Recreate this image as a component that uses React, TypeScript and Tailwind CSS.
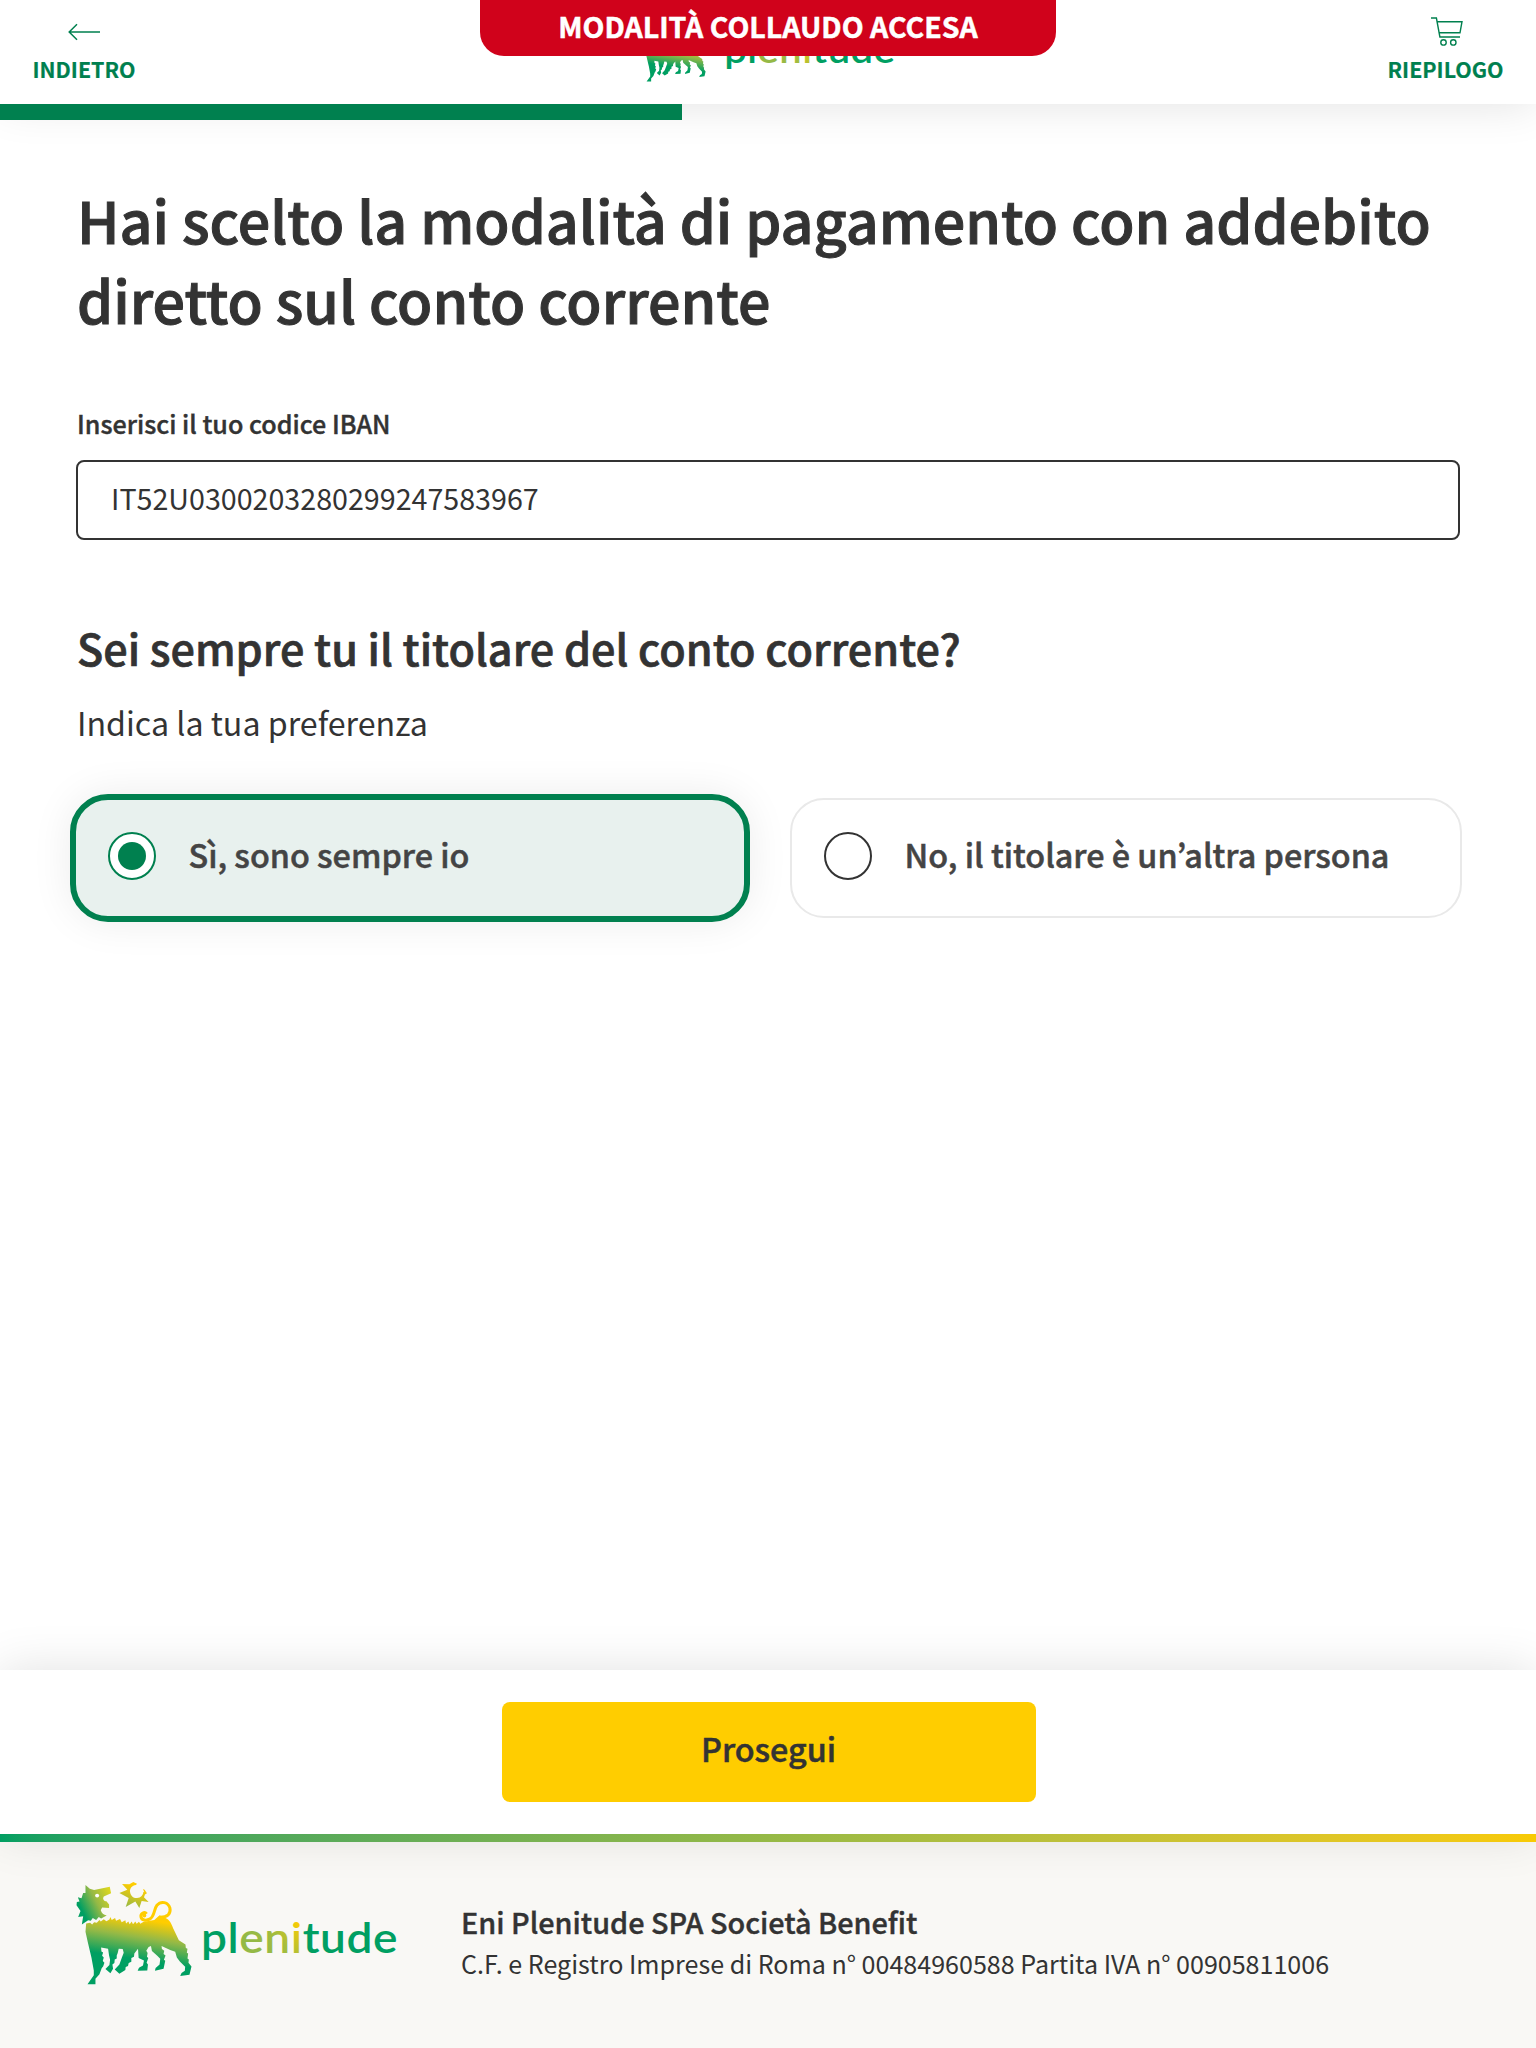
import React, { useState } from "react";

function ArrowLeftIcon() {
  return (
    <svg width="32" height="18" viewBox="0 0 32 18" fill="none" stroke="#00804f" strokeWidth="1.5">
      <path d="M32 9H1.5M9 1.2L1.2 9L9 16.8" />
    </svg>
  );
}

function CartIcon() {
  return (
    <svg width="32" height="29" viewBox="0 0 32 29" fill="none" stroke="#00804f" strokeWidth="1.4">
      <path d="M0 1H5.4L8.9 20H29" />
      <path d="M6 4.7H31L29 15.8H8" />
      <circle cx="12.5" cy="25.4" r="2.7" />
      <circle cx="22.3" cy="25.4" r="2.7" />
    </svg>
  );
}

function SixLeggedDog({ id, className }: { id: string; className: string }) {
  return (
    <svg className={className} viewBox="33 34 348 313">
      <defs>
        <linearGradient id={id + "-head"} gradientUnits="userSpaceOnUse" x1="48" y1="118" x2="138" y2="72">
          <stop offset="0" stopColor="#009f62" />
          <stop offset="0.5" stopColor="#95b946" />
          <stop offset="1" stopColor="#dbd61f" />
        </linearGradient>
        <linearGradient id={id + "-body"} gradientUnits="userSpaceOnUse" x1="225" y1="148" x2="206" y2="268">
          <stop offset="0" stopColor="#ffcd00" />
          <stop offset="0.45" stopColor="#95b946" />
          <stop offset="1" stopColor="#009f62" />
        </linearGradient>
        <linearGradient id={id + "-sun"} gradientUnits="userSpaceOnUse" x1="215" y1="50" x2="190" y2="115">
          <stop offset="0" stopColor="#ffcd00" />
          <stop offset="1" stopColor="#95b946" />
        </linearGradient>
      </defs>
      <path
        fill={"url(#" + id + "-head)"}
        d="M61 46L74 57L87 61L134 51L138 71L116 81L114 86C115 93 119 96 124 95L132 105L132 115L111 114L107 122C110 131 115 135 125 138L108 147L101 142L93 151L83 145L77 154L69 152L50 165L54 140L39 142L46 124L34 107L35 97L43 96L38 83L49 86L54 70L61 70Z"
      />
      <circle cx="96" cy="78" r="6" fill="#fff" />
      <path
        fill={"url(#" + id + "-body)"}
        d="M63 162L75 160L81 165L87 158L95 160L103 151L107 156L116 149L124 155L133 150L136 142L140 151L150 145L153 154L165 148L170 158L181 152L183 162L190 156L194 164L200 156L204 164L211 156L215 163L222 157L226 163L236 157L268 151L284 137L305 147C318 155 321 168 327 181L342 212L362 225L363 236L368 238L366 250L370 252L368 267L372 270L371 280L380 291L374 316L346 320L350 311L360 304L361 292L345 276L336 264L331 247L316 242L290 230L291 239L298 244L296 254L302 258L297 271L301 274L296 298L270 304L272 296L284 285L286 268L277 259L261 245L258 230L251 233L244 244L248 251L246 262L250 266L245 280L249 285L247 303L218 304L222 295L234 288L237 273L221 266L219 238L208 252L207 262L199 266L199 277L191 281L189 290L182 293L181 302L163 313L149 300L163 285L170 266L176 250L173 239L161 238L158 251L155 258L155 267L149 270L148 281L142 285L144 298L136 312L121 299L133 287L135 271L132 258L129 238L108 234L109 246L114 249L111 259L116 264L113 275L118 280L114 291L110 296L103 315L91 328L91 345L67 345L86 318L86 303L79 265L68 218L61 187Z"
      />
      <path
        d="M245 133C239 125 226 131 228 142C230 153 244 154 254 149C269 142 267 118 276 107C289 92 310 98 315 115C319 133 307 143 286 143"
        fill="none"
        stroke="#ffcd00"
        strokeWidth="9"
      />
      <circle cx="238" cy="138" r="6" fill="#ffcd00" />
      <path
        fill={"url(#" + id + "-sun)"}
        d="M171 43L193 44L205 37L216 42L213 46C201 47 194 57 195 66C197 79 206 86 216 85C228 84 235 76 235 66L238 68L234 58L239 60L246 71L240 75L237 83L251 97L230 94L223 115L211 96L182 112L191 85L163 70L187 60Z"
      />
    </svg>
  );
}

function Wordmark({ id, className }: { id: string; className: string }) {
  return (
    <svg className={className} viewBox="0 0 194 42">
      <defs>
        <linearGradient id={id + "-en"} gradientUnits="userSpaceOnUse" x1="60" y1="30" x2="97" y2="3">
          <stop offset="0" stopColor="#95b946" />
          <stop offset="0.45" stopColor="#a5bd3c" />
          <stop offset="1" stopColor="#ffcd00" />
        </linearGradient>
      </defs>
      <text
        x="-2"
        y="32.5"
        textLength="197"
        lengthAdjust="spacingAndGlyphs"
        fontFamily="Lato, sans-serif"
        fontWeight="600"
        fontSize="41.5"
        letterSpacing="0.5"
        fill="#009f62"
      >
        pl<tspan fill={"url(#" + id + "-en)"}>eni</tspan>tude
      </text>
    </svg>
  );
}

function RadioMark({ checked }: { checked: boolean }) {
  return checked ? (
    <span className="flex size-12 shrink-0 items-center justify-center rounded-full border-2 border-[#00804f] bg-white">
      <span className="size-7 rounded-full bg-[#00804f]" />
    </span>
  ) : (
    <span className="size-12 shrink-0 rounded-full border-2 border-[#333]" />
  );
}

function Option({ label, checked, onSelect }: { label: string; checked: boolean; onSelect: () => void }) {
  return (
    <button
      onClick={onSelect}
      className={
        checked
          ? "-m-1 flex h-32 items-center rounded-[38px] border-6 border-[#00804f] bg-[#e8f1ee] pb-1 pl-8 shadow-[0_0_40px_rgba(0,0,0,0.08)]"
          : "flex h-[120px] items-center rounded-[34px] border-2 border-[#e9e9e9] bg-white pb-1 pl-8"
      }
    >
      <RadioMark checked={checked} />
      <span className="ml-[32.5px] pb-1 text-[32.35px] leading-10 font-medium whitespace-nowrap text-[#444] [-webkit-text-stroke:0.5px]">
        {label}
      </span>
    </button>
  );
}

export default function App() {
  const [owner, setOwner] = useState(0);
  const options = ["Sì, sono sempre io", "No, il titolare è un’altra persona"];
  return (
    <div className="relative flex h-[2048px] w-[1536px] flex-col overflow-hidden bg-white font-['Noto_Sans_CJK_KR',sans-serif] text-[#333]">
      <header className="relative flex h-[104px] shrink-0 justify-between bg-white px-8 shadow-[0_0_46px_rgba(0,0,0,0.12)]">
        <button className="flex w-[104px] flex-col items-center text-[21.4px] leading-8 font-bold text-[#00804f] [-webkit-text-stroke:0.2px]">
          <span className="mt-[23px] flex h-[30px]">
            <ArrowLeftIcon />
          </span>
          INDIETRO
        </button>
        <div className="ml-[11px] flex pt-[23px]">
          <SixLeggedDog id="top" className="h-[59px] w-[66px]" />
          <Wordmark id="top" className="mt-[12px] ml-5 h-[36.5px] w-[168.5px]" />
        </div>
        <button className="flex w-[117px] flex-col items-center text-[21.4px] leading-8 font-bold text-[#00804f] [-webkit-text-stroke:0.2px]">
          <span className="mt-[17px] flex h-9 pl-0.5">
            <CartIcon />
          </span>
          RIEPILOGO
        </button>
        <div className="absolute top-0 left-1/2 h-14 w-[576px] -translate-x-1/2 rounded-b-3xl bg-[#d0021b] text-center text-[28.5px] leading-[51px] font-bold text-white [-webkit-text-stroke:0.5px]">
          MODALITÀ COLLAUDO ACCESA
        </div>
      </header>
      <div className="relative h-4 w-[682px] shrink-0 bg-[#00804f]" />

      <main className="flex grow flex-col px-[76px] pt-[59px]">
        <h1 className="pl-px text-[57.4px] leading-20 font-medium [-webkit-text-stroke:1px]">
          Hai scelto la modalità di pagamento con addebito
          <br />
          diretto sul conto corrente
        </h1>
        <label className="mt-[66px] pl-px text-[25.1px] leading-9 font-medium [-webkit-text-stroke:0.4px]">
          Inserisci il tuo codice IBAN
        </label>
        <input
          className="mt-[19px] h-20 rounded-lg border-2 border-[#333] px-[33px] pb-[5px] text-[28.65px] outline-none"
          defaultValue="IT52U0300203280299247583967"
        />
        <h2 className="mt-[79px] pl-px text-[43.15px] leading-14 font-medium [-webkit-text-stroke:0.7px]">
          Sei sempre tu il titolare del conto corrente?
        </h2>
        <p className="mt-[27px] pl-px text-[32.2px] leading-10">Indica la tua preferenza</p>
        <div className="-mx-0.5 mt-14 grid grid-cols-2 gap-11">
          {options.map((label, i) => (
            <Option key={label} label={label} checked={owner === i} onSelect={() => setOwner(i)} />
          ))}
        </div>
      </main>

      <div className="relative z-10 flex h-[164px] shrink-0 items-center justify-center bg-white pl-0.5 shadow-[0_0_46px_rgba(0,0,0,0.12)]">
        <button className="h-[100px] w-[534px] rounded-lg bg-[#ffcd00] pr-px pb-2 text-[32.3px] font-medium text-[#333] [-webkit-text-stroke:0.5px]">
          Prosegui
        </button>
      </div>
      <footer className="relative flex h-[214px] shrink-0 flex-col bg-[#f9f8f5]">
        <div className="relative z-20 h-2 bg-linear-to-r from-[#009f62] via-[#95b946] to-[#f8ca04]" />
        <div className="flex pl-[76px]">
          <SixLeggedDog id="foot" className="mt-[39px] h-[104px] w-[116px]" />
          <Wordmark id="foot" className="mt-[78px] ml-[11px] h-[42px] w-[194px]" />
          <div className="mt-[58px] ml-[64px]">
            <p className="text-[28.8px] leading-11 font-medium [-webkit-text-stroke:0.4px]">Eni Plenitude SPA Società Benefit</p>
            <p className="-mt-px text-[25.07px] leading-10">
              C.F. e Registro Imprese di Roma n° 00484960588 Partita IVA n° 00905811006
            </p>
          </div>
        </div>
      </footer>
    </div>
  );
}
